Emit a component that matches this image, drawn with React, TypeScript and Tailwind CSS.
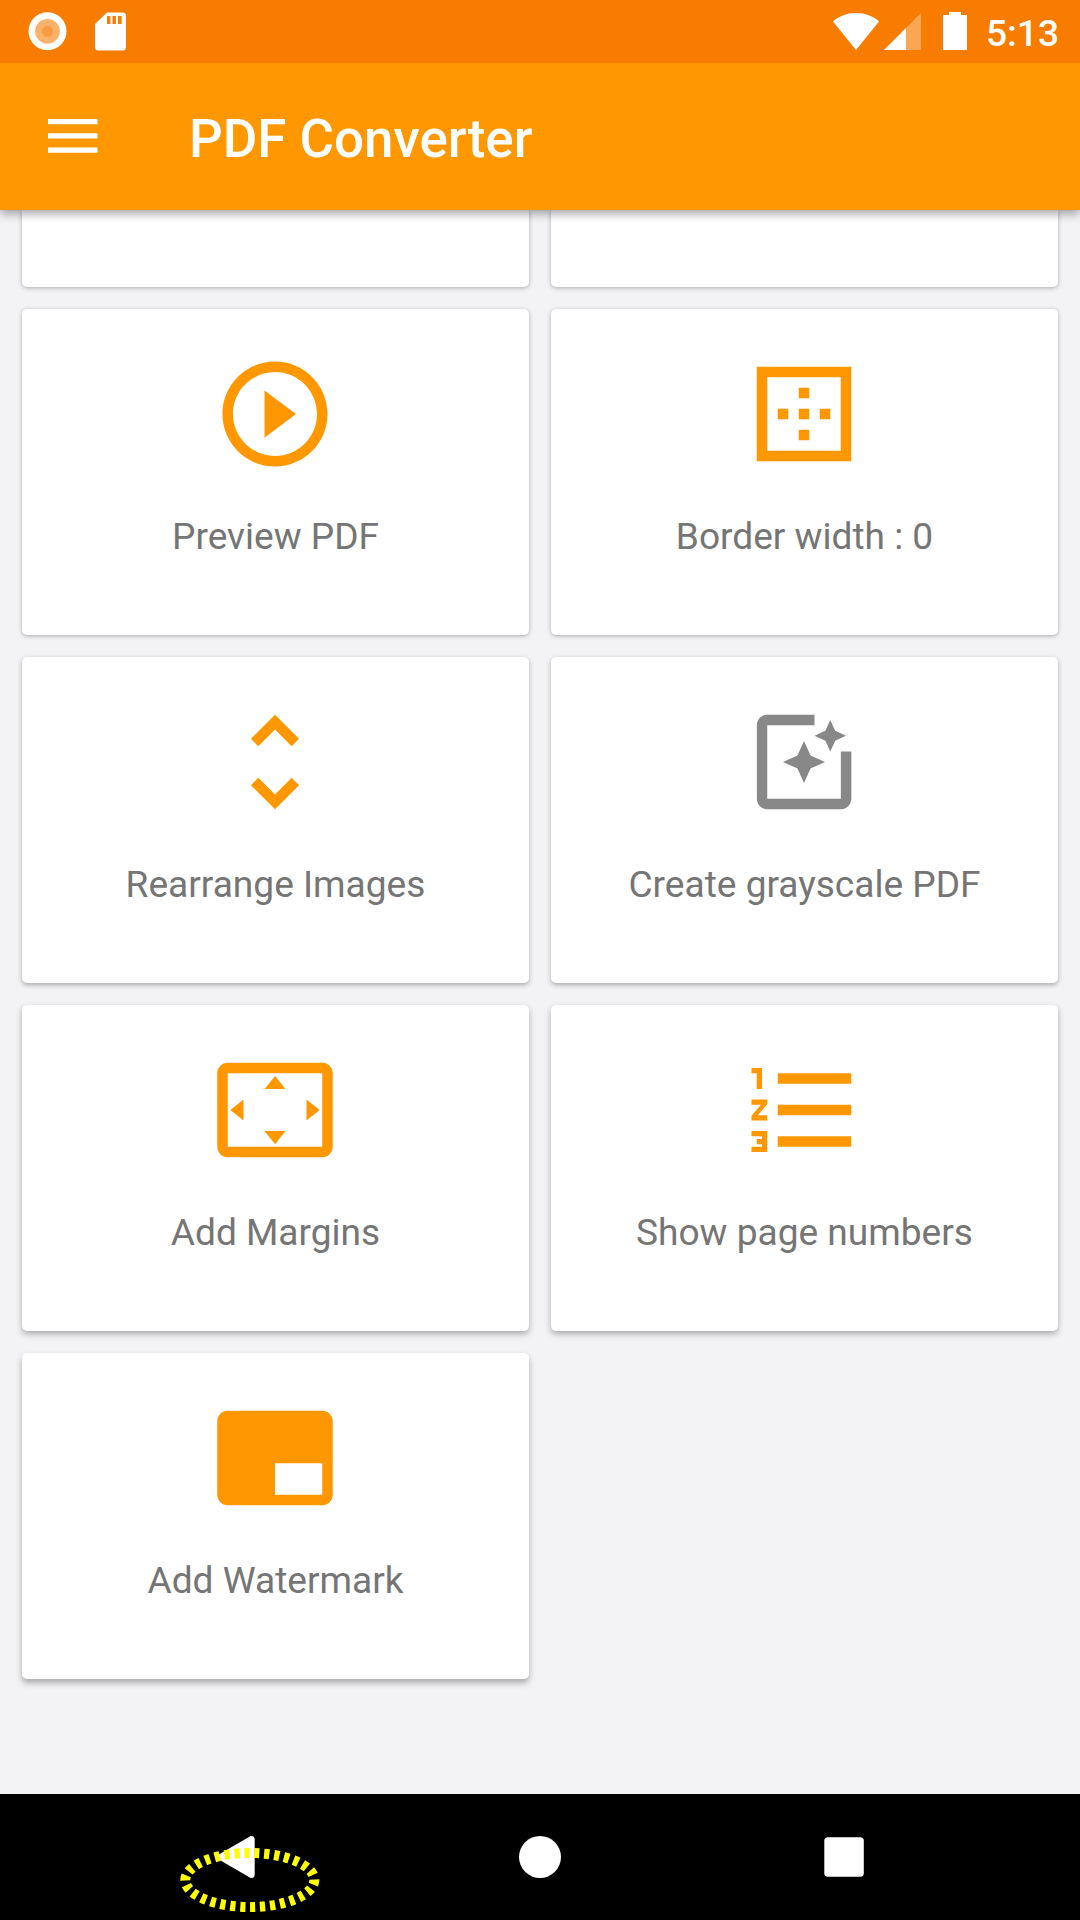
import type { IconType } from "react-icons";
import {
  MdBorderOuter,
  MdBrandingWatermark,
  MdFormatListNumbered,
  MdPhotoFilter,
  MdPlayCircleOutline,
  MdSettingsOverscan,
  MdUnfoldMore,
} from "react-icons/md";

type Option = { label: string; Icon: IconType; tint: string; shadow: string };

// Shadows deepen towards the bottom of the screen, as lit from above.
const LIGHT = "shadow-[0_1px_4px_rgba(0,0,0,0.3)]";
const MEDIUM = "shadow-[0_2px_5px_rgba(0,0,0,0.3)]";
const DEEP = "shadow-[0_3px_6px_rgba(0,0,0,0.3)]";
const DEEPEST = "shadow-[0_4px_6px_rgba(0,0,0,0.3)]";

const options: Option[] = [
  { label: "Preview PDF", Icon: MdPlayCircleOutline, tint: "text-[#ff9800]", shadow: LIGHT },
  { label: "Border width : 0", Icon: MdBorderOuter, tint: "text-[#ff9800]", shadow: LIGHT },
  { label: "Rearrange Images", Icon: MdUnfoldMore, tint: "text-[#ff9800]", shadow: MEDIUM },
  { label: "Create grayscale PDF", Icon: MdPhotoFilter, tint: "text-[#888888]", shadow: MEDIUM },
  { label: "Add Margins", Icon: MdSettingsOverscan, tint: "text-[#ff9800]", shadow: DEEP },
  { label: "Show page numbers", Icon: MdFormatListNumbered, tint: "text-[#ff9800]", shadow: DEEP },
  { label: "Add Watermark", Icon: MdBrandingWatermark, tint: "text-[#ff9800]", shadow: DEEPEST },
];

function StatusBar() {
  return (
    <div className="flex h-[63px] items-start bg-[#f77c00] pl-7 pr-[21px] text-white">
      <svg className="mt-3 h-10 w-10" viewBox="0 0 40 40">
        <circle cx="19.5" cy="19.3" r="19" fill="#fff" />
        <circle cx="19.5" cy="19.3" r="12.4" fill="#fab26b" />
        <circle cx="19.5" cy="19.3" r="5.5" fill="#f99b41" />
      </svg>
      <svg className="ml-[27px] mt-3 h-10 w-8" viewBox="0 0 32 40">
        <path
          d="M12 .5h15.500a3.500 3.500 0 0 1 3.500 3.500v31a3.500 3.500 0 0 1-3.500 3.500h-24a3.500 3.500 0 0 1-3.500-3.500v-23z"
          fill="#fff"
        />
        <path d="M12 4h3.400v8H12zM17.500 4h3.400v8h-3.400zM23 4h3.700v8H23z" fill="#f77c00" />
      </svg>
      <div className="flex-1" />
      <svg className="mt-3 h-10 w-12" viewBox="0 0 48 40">
        <path d="M24 38L1 9.500C7 4 15 1 24 1s17 3 23 8.500z" fill="#fff" />
      </svg>
      <svg className="ml-1 mt-3 h-10 w-[38px]" viewBox="0 0 38 40">
        <path d="M0 38L37 1v37z" fill="#fff" fillOpacity="0.33" />
        <path d="M0 38L22 16v22z" fill="#fff" />
      </svg>
      <svg className="ml-[21px] mt-3 h-10 w-6" viewBox="0 0 24 40">
        <path d="M6 0h12v3h6v35H0V3h6z" fill="#fff" />
      </svg>
      <span className="ml-[19px] mt-3 text-[37.1px] font-medium leading-[44px]">5:13</span>
    </div>
  );
}

function AppBar() {
  return (
    <header className="flex h-[147px] items-center bg-[#ff9800] pl-12 text-white">
      <svg className="h-[35px] w-[50px]" viewBox="0 0 50 35">
        <path d="M0 0h49.500v5.300H0zM0 14.200h49.500v5.300H0zM0 28.500h49.500v5.300H0z" fill="#fff" />
      </svg>
      <h1 className="ml-[91px] mt-[5px] text-[52.9px] font-medium leading-[62px]">PDF Converter</h1>
    </header>
  );
}

function OptionCard({ label, Icon, tint, shadow }: Option) {
  return (
    <button
      className={`flex h-[326px] flex-col items-center rounded-[5px] bg-white pt-[42px] ${shadow}`}
    >
      <Icon className={`mr-[2px] size-[126px] shrink-0 ${tint}`} />
      <span className="mt-[38px] text-[37.1px] leading-[44px] text-[#757575]">{label}</span>
    </button>
  );
}

function NavigationBar() {
  return (
    <nav className="h-[126px] bg-black">
      <svg className="h-[126px] w-[1080px]" viewBox="0 1794 1080 126">
        <path
          d="M251 1837.500L220 1855.500Q218.500 1857 220 1858.500L251 1876.500Q253.200 1877 253.200 1874.500V1839.500Q253.200 1837 251 1837.500z"
          fill="#fff"
          stroke="#fff"
          strokeWidth="3"
          strokeLinejoin="round"
        />
        <circle cx="540" cy="1857" r="21" fill="#fff" />
        <rect x="824.3" y="1837.200" width="39.500" height="39.500" rx="3.500" fill="#fff" />
        <ellipse
          cx="249.800"
          cy="1880"
          rx="64.500"
          ry="27"
          fill="none"
          stroke="#ffff00"
          strokeWidth="10"
          pathLength={300}
          strokeDasharray="5.200 4.800"
          strokeDashoffset="0.500"
        />
      </svg>
    </nav>
  );
}

export default function App() {
  return (
    <div className="flex h-[1920px] w-[1080px] flex-col overflow-hidden bg-[#f3f3f5] font-[Roboto,sans-serif]">
      <div className="z-10 shadow-[0_4px_9px_rgba(0,0,0,0.34)]">
        <StatusBar />
        <AppBar />
      </div>
      <main className="flex-1 px-[22px]">
        <div className="grid grid-cols-2 gap-[22px]">
          <div className={`h-[77px] rounded-b-[5px] bg-white ${LIGHT}`} />
          <div className={`h-[77px] rounded-b-[5px] bg-white ${LIGHT}`} />
          {options.map((option) => (
            <OptionCard key={option.label} {...option} />
          ))}
        </div>
      </main>
      <NavigationBar />
    </div>
  );
}
